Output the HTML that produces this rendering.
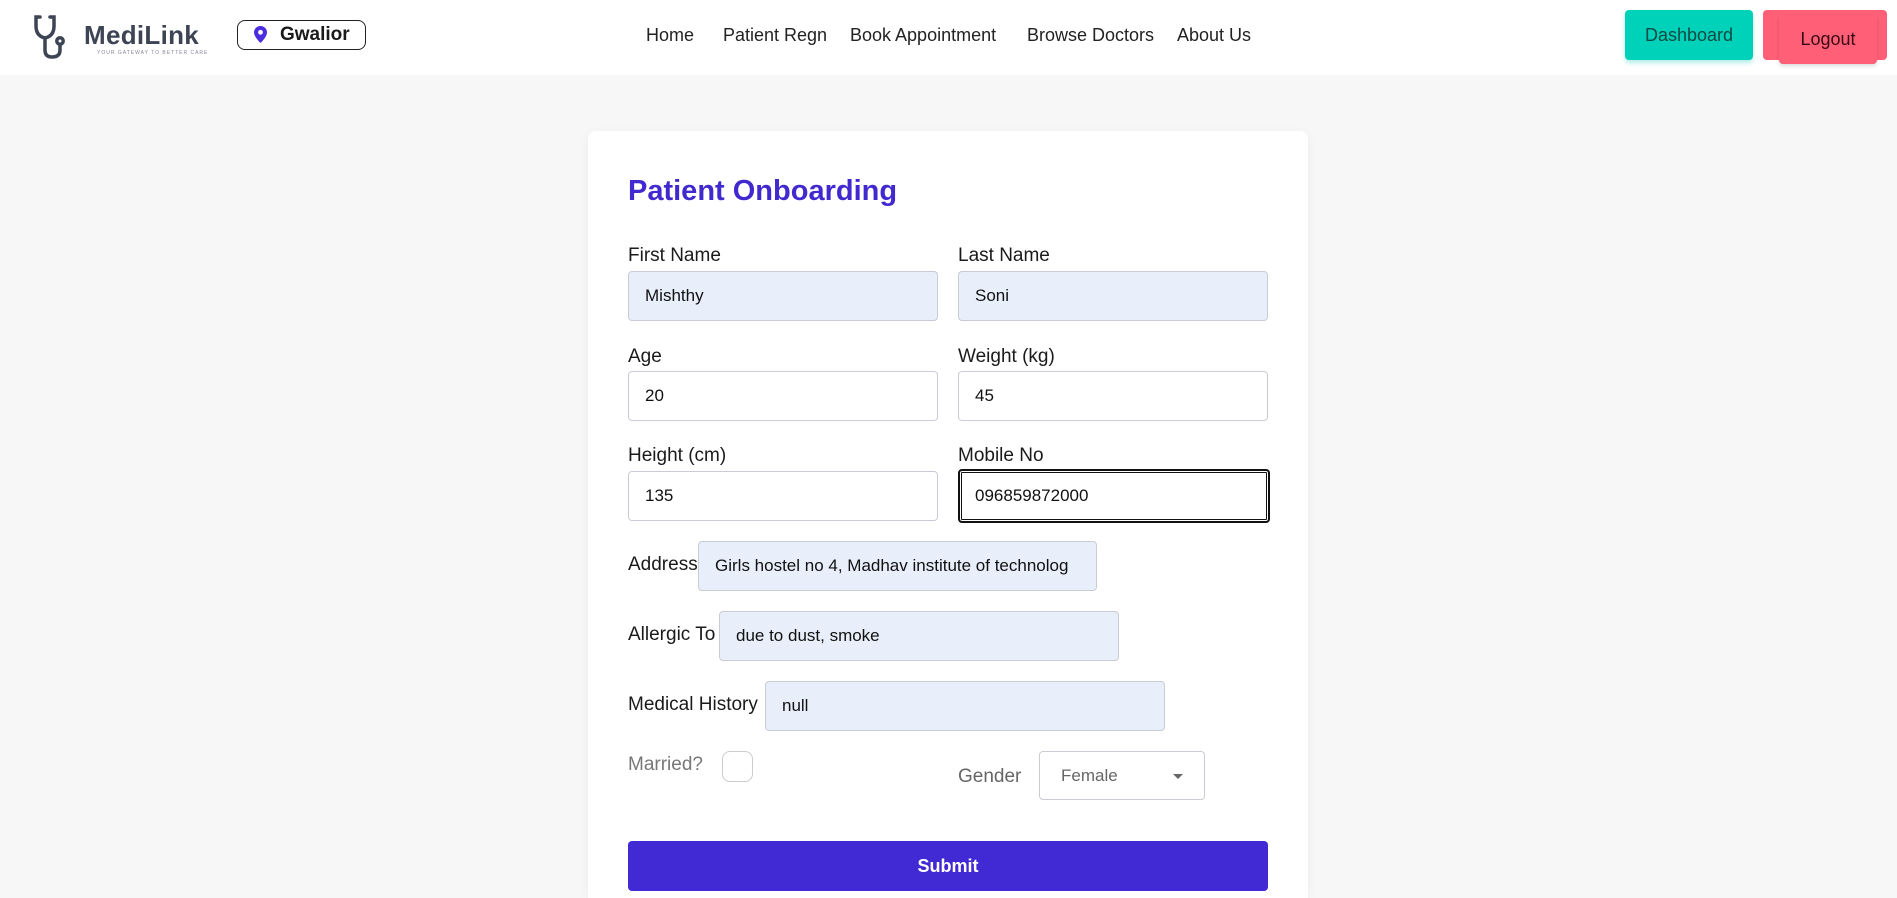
<!DOCTYPE html>
<html style="width:1897px;height:898px;overflow:hidden"><head><meta charset="utf-8"><style>
*{box-sizing:border-box;margin:0;padding:0}
body{width:1897px;height:898px;background:#f7f7f7;font-family:"Liberation Sans",sans-serif;position:relative;overflow:hidden;color:#1a1a1a}
.a{position:absolute}
header{position:absolute;left:0;top:0;width:1897px;height:75px;background:#fff}
.nav{font-size:18px;color:#222;top:25px}
.card{left:588px;top:131px;width:720px;height:767px;background:#fff;border-radius:8px 8px 0 0;box-shadow:0 2px 10px rgba(0,0,0,.05)}
.lbl{font-size:19px;color:#1a1a1a}
.in{border:1px solid #c9ccd3;border-radius:4px;background:#fff;font-size:17px;padding-left:16px;display:flex;align-items:center;height:50px;overflow:hidden;white-space:nowrap;color:#111}
.bl{background:#e8effb}
</style></head><body>
<header>
<svg class="a" style="left:33px;top:14px" width="40" height="46" viewBox="0 0 40 46" fill="none" stroke="#3d4454" stroke-width="3.5" stroke-linecap="round"><path d="M7 3 H3 V12 Q3 22 12 24 Q21 22 21 12 V3 H17"/><path d="M12 24 V36 Q12 43 19 43 Q27 43 27 36 V30"/><circle cx="27" cy="27" r="3.2" fill="#fff"/></svg>
<div class="a" style="left:84px;top:20px;font-size:26px;font-weight:bold;color:#3d4454;letter-spacing:.3px">MediLink</div>
<div class="a" style="left:97px;top:50px;font-size:5px;color:#889;letter-spacing:1px">YOUR GATEWAY TO BETTER CARE</div>
<div class="a" style="left:237px;top:20px;width:129px;height:30px;border:1.5px solid #222;border-radius:8px"></div>
<svg class="a" style="left:254px;top:26px" width="13" height="17" viewBox="0 0 13 17"><path d="M6.5 0C3 0 0 2.8 0 6.4 0 11 6.5 17 6.5 17S13 11 13 6.4C13 2.8 10 0 6.5 0z" fill="#4a2ee0"/><circle cx="6.5" cy="6.3" r="2.4" fill="#fff"/></svg>
<div class="a" style="left:280px;top:24px;font-size:19px;font-weight:bold">Gwalior</div>
<div class="a nav" style="left:646px">Home</div>
<div class="a nav" style="left:723px">Patient Regn</div>
<div class="a nav" style="left:850px">Book Appointment</div>
<div class="a nav" style="left:1027px">Browse Doctors</div>
<div class="a nav" style="left:1177px">About Us</div>
<div class="a" style="left:1625px;top:10px;width:128px;height:50px;background:#00d1b9;border-radius:4px;box-shadow:0 3px 5px rgba(0,200,180,.3);color:#114a44;font-size:18px;display:flex;align-items:center;justify-content:center">Dashboard</div>
<div class="a" style="left:1763px;top:10px;width:124px;height:50px;background:#ff6078;border-radius:4px"></div>
<div class="a" style="left:1779px;top:15px;width:98px;height:49px;background:#ff6078;border-radius:4px;box-shadow:0 2px 4px rgba(0,0,0,.15);color:#3a0a14;font-size:18px;display:flex;align-items:center;justify-content:center">Logout</div>
</header>
<div class="a card"></div>
<div class="a" style="left:628px;top:175px;font-size:29px;font-weight:bold;color:#4129d0">Patient Onboarding</div>
<div class="a lbl" style="left:628px;top:245px">First Name</div>
<div class="a lbl" style="left:958px;top:245px">Last Name</div>
<div class="a in bl" style="left:628px;top:271px;width:310px">Mishthy</div>
<div class="a in bl" style="left:958px;top:271px;width:310px">Soni</div>
<div class="a lbl" style="left:628px;top:346px">Age</div>
<div class="a lbl" style="left:958px;top:346px">Weight (kg)</div>
<div class="a in" style="left:628px;top:371px;width:310px">20</div>
<div class="a in" style="left:958px;top:371px;width:310px">45</div>
<div class="a lbl" style="left:628px;top:445px">Height (cm)</div>
<div class="a lbl" style="left:958px;top:445px">Mobile No</div>
<div class="a in" style="left:628px;top:471px;width:310px">135</div>
<div class="a in" style="left:958px;top:469px;width:312px;height:54px;border:2px solid #111;box-shadow:inset 0 0 0 1px #fff,inset 0 0 0 2px #111;padding-left:15px">096859872000</div>
<div class="a lbl" style="left:628px;top:554px">Address</div>
<div class="a in bl" style="left:698px;top:541px;width:399px">Girls hostel no 4, Madhav institute of technolog</div>
<div class="a lbl" style="left:628px;top:624px">Allergic To</div>
<div class="a in bl" style="left:719px;top:611px;width:400px">due to dust, smoke</div>
<div class="a lbl" style="left:628px;top:694px">Medical History</div>
<div class="a in bl" style="left:765px;top:681px;width:400px">null</div>
<div class="a lbl" style="left:628px;top:754px;color:#777">Married?</div>
<div class="a" style="left:722px;top:751px;width:31px;height:31px;border:1.5px solid #ccc;border-radius:8px;background:#fff"></div>
<div class="a lbl" style="left:958px;top:766px;color:#666">Gender</div>
<div class="a in" style="left:1039px;top:751px;width:166px;height:49px;color:#666;padding-left:21px">Female</div>
<div class="a" style="left:1173px;top:774px;width:0;height:0;border-left:5px solid transparent;border-right:5px solid transparent;border-top:5px solid #666"></div>
<div class="a" style="left:628px;top:841px;width:640px;height:50px;background:#4129d4;border-radius:4px;color:#fff;font-size:18px;font-weight:bold;display:flex;align-items:center;justify-content:center">Submit</div>
</body></html>
